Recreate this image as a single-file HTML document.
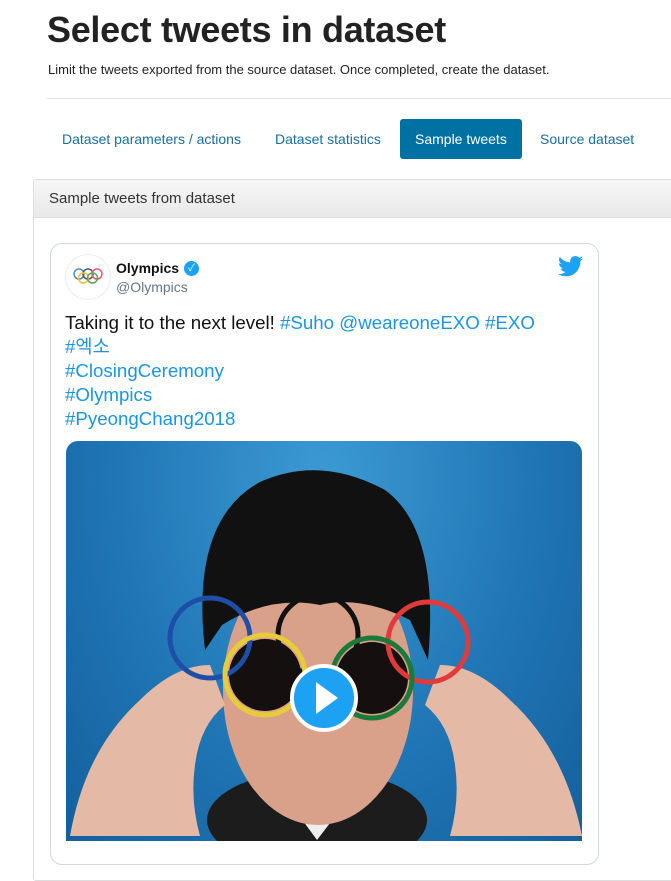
<!DOCTYPE html>
<html><head><meta charset="utf-8"><style>
body{margin:0;width:671px;height:836px;overflow:hidden;background:#fff;font-family:"Liberation Sans","Noto Sans CJK KR",sans-serif;position:relative}
h1{position:absolute;left:47px;top:9px;margin:0;font-size:36px;font-weight:bold;color:#222;letter-spacing:-0.3px}
.sub{position:absolute;left:48px;top:62px;font-size:13px;color:#222}
.hr{position:absolute;left:47px;top:98px;width:624px;height:1px;background:#e2e2e2}
.tab{position:absolute;top:119px;height:40px;line-height:40px;font-size:14px;color:#1a6e9e}
.act{background:#0071a3;color:#fff;border-radius:3px;padding:0 15px}
.panel{position:absolute;left:33px;top:179px;width:660px;height:700px;border:1px solid #ddd;border-radius:3px}
.ph{height:37px;background:linear-gradient(#f6f6f6,#e9e9e9);border-bottom:1px solid #ddd;font-size:15px;line-height:38px;padding-left:15px;color:#333}
.card{position:absolute;left:50px;top:243px;width:547px;height:620px;border:1px solid #cfd9de;border-radius:12px}
.txt{position:absolute;left:65px;top:311px;font-size:18.7px;line-height:24px;color:#111}
.txt a{color:#1b95e0}
.img{position:absolute;left:66px;top:441px;width:516px;height:400px;border-radius:12px 12px 0 0;overflow:hidden;background:radial-gradient(ellipse at 50% 10%,#3c9ad3,#1f74b3 60%,#14609c)}
</style></head><body>
<h1>Select tweets in dataset</h1>
<div class="sub">Limit the tweets exported from the source dataset. Once completed, create the dataset.</div>
<div class="hr"></div>
<div class="tab" style="left:62px">Dataset parameters / actions</div>
<div class="tab" style="left:275px">Dataset statistics</div>
<div class="tab act" style="left:400px">Sample tweets</div>
<div class="tab" style="left:540px">Source dataset</div>
<div class="panel"><div class="ph">Sample tweets from dataset</div></div>
<div class="card"></div>
<div style="position:absolute;left:65px;top:254px;width:44px;height:44px;border-radius:50%;border:1px solid #eee;background:#fff"></div>
<svg style="position:absolute;left:72px;top:268px" width="32" height="16"><g fill="none" stroke-width="1.5"><circle cx="7" cy="6" r="5" stroke="#4a8fd0"/><circle cx="16" cy="6" r="5" stroke="#555"/><circle cx="25" cy="6" r="5" stroke="#e57"/><circle cx="11.5" cy="10" r="5" stroke="#f0c040"/><circle cx="20.5" cy="10" r="5" stroke="#5a5"/></g></svg>
<div style="position:absolute;left:116px;top:260px;font-size:14px;font-weight:bold;color:#111">Olympics</div>
<div style="position:absolute;left:184px;top:261px;width:15px;height:15px;border-radius:50%;background:#1da1f2;color:#fff;font-size:10px;line-height:15px;text-align:center">✓</div>
<div style="position:absolute;left:116px;top:279px;font-size:14px;color:#657786">@Olympics</div>
<svg style="position:absolute;left:558px;top:256px" width="25" height="21" viewBox="0 0 24 20"><path fill="#1da1f2" d="M24 2.4a9.8 9.8 0 0 1-2.8.8A4.9 4.9 0 0 0 23.3.4a9.9 9.9 0 0 1-3.1 1.2A4.9 4.9 0 0 0 11.8 6 14 14 0 0 1 1.7.9a4.9 4.9 0 0 0 1.5 6.6A4.9 4.9 0 0 1 1 6.9a4.9 4.9 0 0 0 3.9 4.8 4.9 4.9 0 0 1-2.2.1 4.9 4.9 0 0 0 4.6 3.4A9.9 9.9 0 0 1 0 17.2 14 14 0 0 0 7.5 19.4c9 0 14-7.5 14-14v-.6A10 10 0 0 0 24 2.4z"/></svg>
<div class="txt">Taking it to the next level! <a>#Suho</a> <a>@weareoneEXO</a> <a>#EXO</a><br><a>#엑소</a><br><a>#ClosingCeremony</a><br><a>#Olympics</a><br><a>#PyeongChang2018</a></div>
<div class="img">
<svg width="516" height="400" viewBox="66 441 516 400">
<ellipse cx="317" cy="820" rx="110" ry="50" fill="#1c1c1c"/>
<path d="M295 810 L317 840 L340 810Z" fill="#eee"/>
<ellipse cx="318" cy="690" rx="95" ry="135" fill="#d9a08a"/>
<path d="M205 650 Q190 520 260 482 Q320 455 385 490 Q440 530 428 660 L410 620 Q360 595 320 605 Q270 595 222 625Z" fill="#111"/>
<path d="M70 836 Q85 750 140 700 Q175 665 210 665 L225 705 Q200 725 195 765 Q190 800 200 836Z" fill="#e4b9a6"/>
<path d="M582 836 Q565 750 510 700 Q475 665 440 665 L425 705 Q450 725 455 765 Q460 800 450 836Z" fill="#e4b9a6"/>
<circle cx="265" cy="675" r="36" fill="#150f0f"/><circle cx="372" cy="678" r="36" fill="#150f0f"/>
<g fill="none" stroke-width="5"><circle cx="210" cy="638" r="40" stroke="#1d4fa8"/><circle cx="318" cy="635" r="40" stroke="#111"/><circle cx="428" cy="642" r="40" stroke="#e23a3a"/><circle cx="265" cy="675" r="40" stroke="#e7cc3a"/><circle cx="372" cy="678" r="40" stroke="#1a7a3a"/></g>
<circle cx="324" cy="698" r="32" fill="#1da1f2" stroke="#fff" stroke-width="4"/>
<path d="M316 682 L338 698 L316 714Z" fill="#fff"/>
</svg></div>
</body></html>
